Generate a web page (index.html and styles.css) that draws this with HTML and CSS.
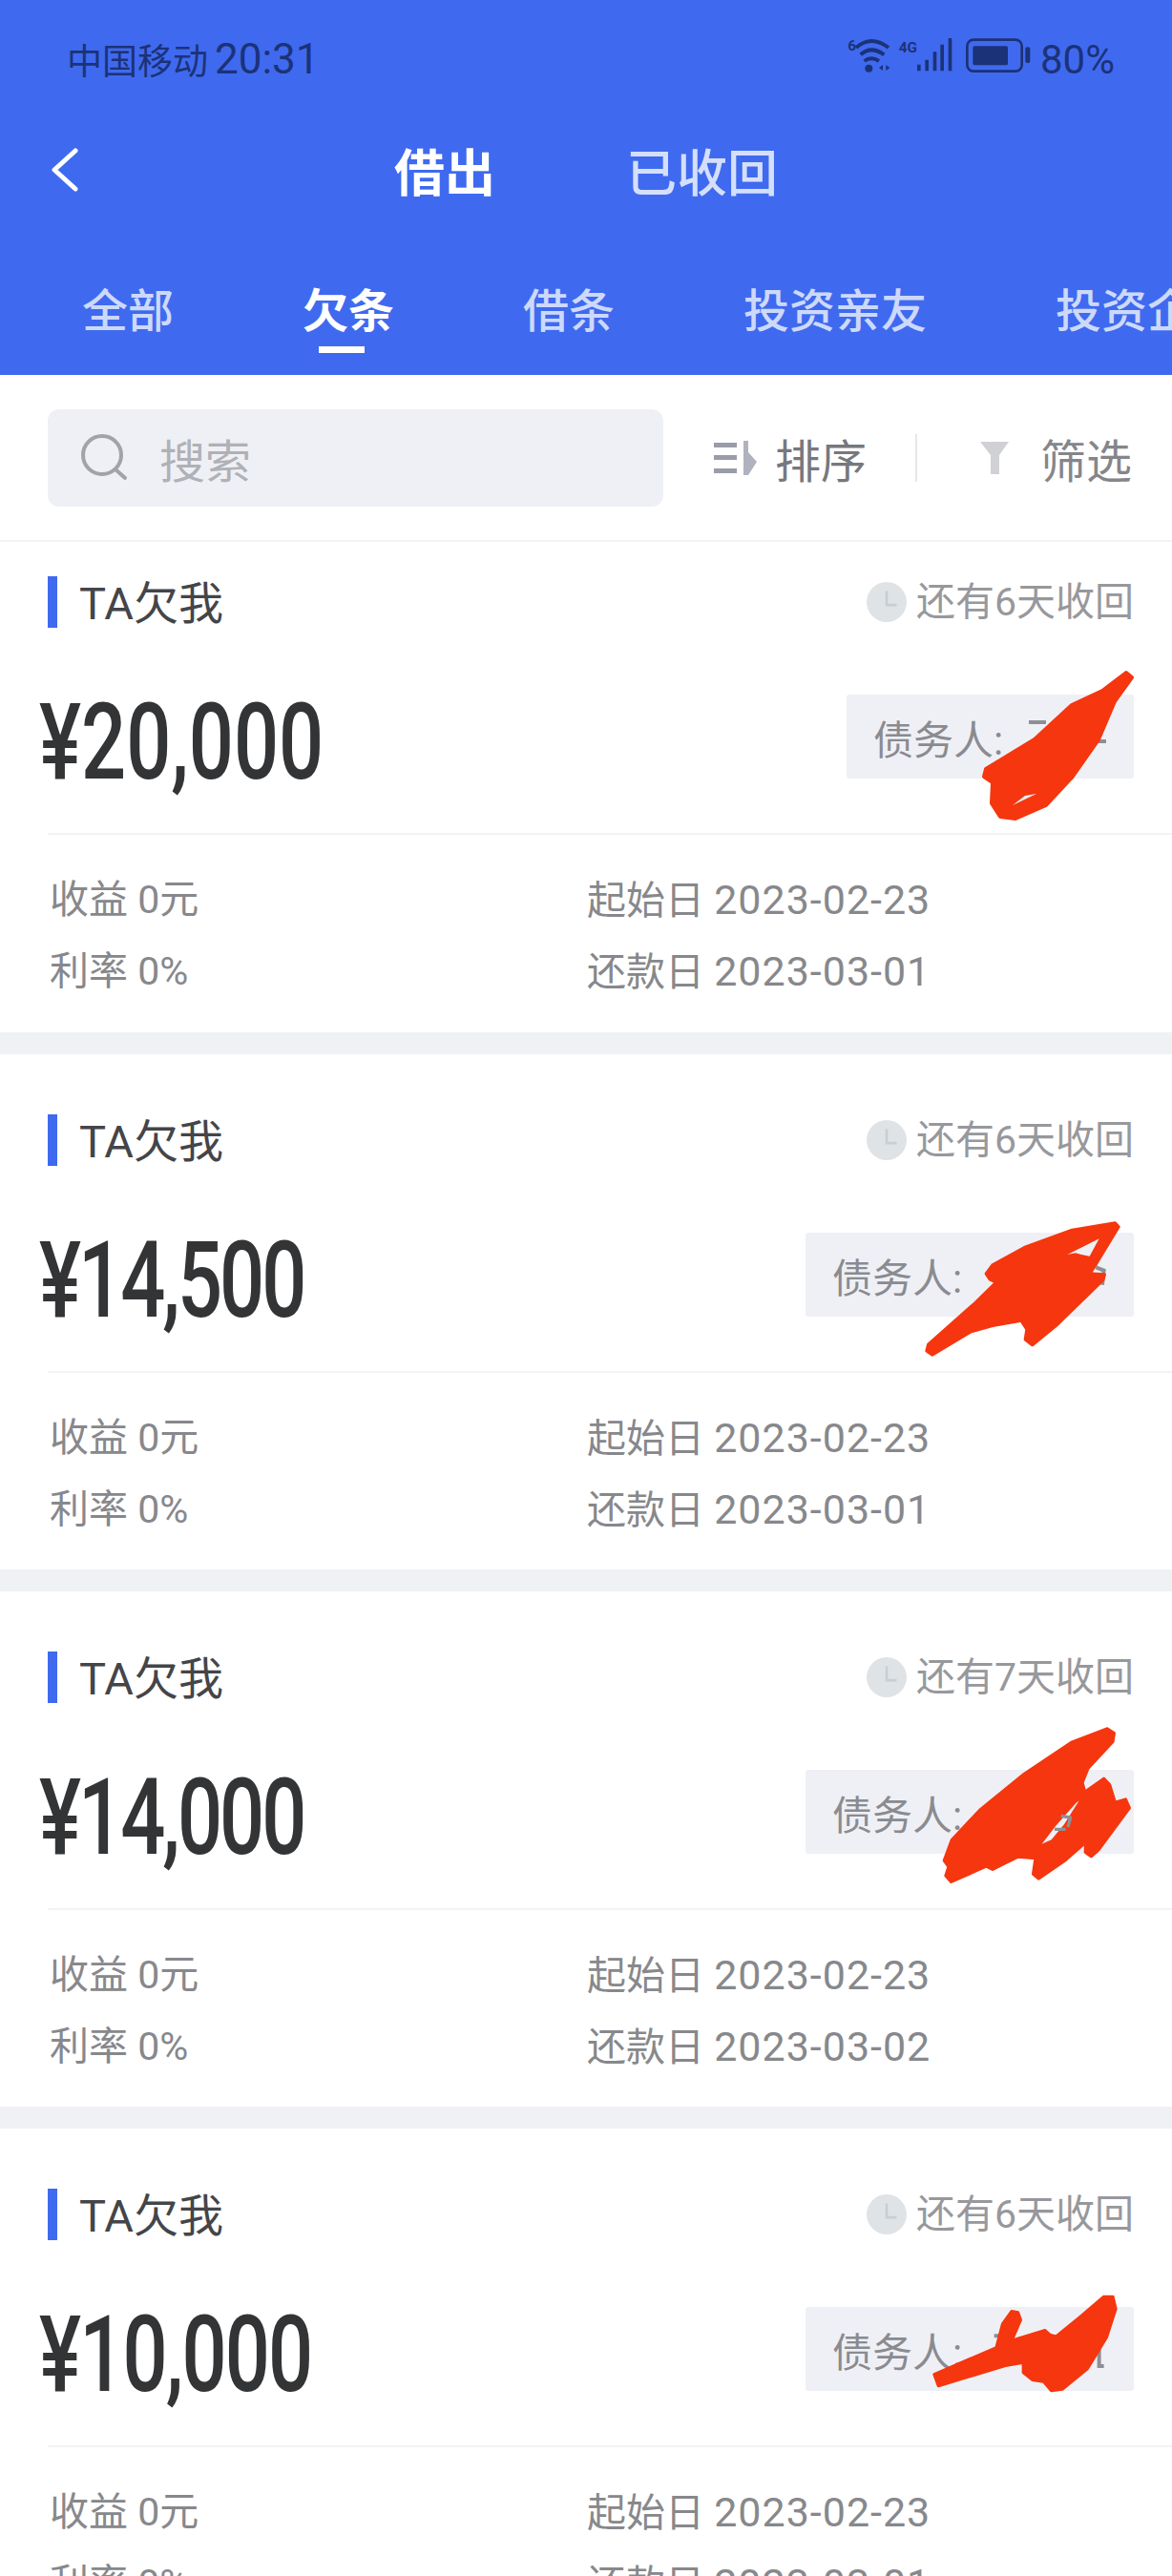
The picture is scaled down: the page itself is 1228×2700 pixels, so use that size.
FILE: index.html
```html
<!DOCTYPE html>
<html lang="zh-CN">
<head>
    <meta charset="UTF-8">
    <meta name="viewport" content="width=device-width, initial-scale=1.0">
    <title>借出</title>
    <link rel="stylesheet" href="styles.css">
</head>
<body>
<div class="page">
    <header class="topbar">
        <div class="status">
            <div class="status-left"><span class="carrier">中国移动</span><span class="clock-time">20:31</span></div>
            <div class="status-right">
                <svg class="status-icons" viewBox="0 0 600 210" width="200" height="70">
                    <text x="22" y="82" class="net-label">6</text>
                    <path d="M48 72 Q95 30 150 72 M62 94 Q95 64 136 94 M74 114 Q95 98 120 114" fill="none" stroke="#1c3278" stroke-width="12"/>
                    <circle cx="88" cy="137" r="12" fill="#1c3278"/>
                    <path d="M120 135 L132 126 V144 Z M154 135 L142 126 V144 Z" fill="#1c3278"/>
                    <text x="182" y="88" class="net-label">4G</text>
                    <path d="M240 125h11v20h-11z M265 110h11v35h-11z M290 85h11v60h-11z M313 62h11v83h-11z M338 42h11v103h-11z" fill="#1c3278"/>
                    <rect x="397" y="47" width="172" height="99" rx="20" fill="none" stroke="#1c3278" stroke-width="8"/>
                    <rect x="415" y="67" width="110" height="60" rx="5" fill="#1c3278"/>
                    <rect x="580" y="70" width="15" height="50" rx="6" fill="#1c3278"/>
                </svg>
                <span class="battery-text">80%</span>
            </div>
        </div>
        <div class="nav">
            <svg class="back" viewBox="0 0 28 46" width="28" height="46"><polyline points="25,3 3,23 25,43" fill="none" stroke="#fff" stroke-width="5" stroke-linecap="round" stroke-linejoin="round"/></svg>
            <div class="nav-title active">借出</div>
            <div class="nav-title">已收回</div>
        </div>
        <div class="tabs">
            <div class="tab">全部</div>
            <div class="tab active">欠条</div>
            <div class="tab">借条</div>
            <div class="tab">投资亲友</div>
            <div class="tab">投资企业</div>
        </div>
    </header>

    <div class="toolbar">
        <div class="search">
            <svg viewBox="0 0 50 50" width="50" height="50"><circle cx="22" cy="22" r="20" fill="none" stroke="#a2a3a8" stroke-width="4"/><path d="M36 37 L46 46" stroke="#a2a3a8" stroke-width="4" stroke-linecap="round"/></svg>
            <span>搜索</span>
        </div>
        <div class="tool sort">
            <svg viewBox="0 0 45 36" width="45" height="36"><path d="M0 2h24v5H0z M0 15h24v5H0z M0 29h24v5H0z" fill="#9a9ca8"/><path d="M31 0h5v12l9 10-9 14h-5z" fill="#b0b2be"/></svg>
            <span>排序</span>
        </div>
        <div class="tool-line"></div>
        <div class="tool filter">
            <svg viewBox="0 0 30 34" width="30" height="34"><path d="M0 0h30L20 14V34h-9V14z" fill="#d0d1d5"/></svg>
            <span>筛选</span>
        </div>
    </div>

    <section class="card card-first">
        <div class="card-head">
            <div class="card-type">TA欠我</div>
            <div class="due"><svg class="due-icon" viewBox="0 0 40 40" width="42" height="42"><circle cx="20" cy="20" r="20" fill="#dfe3e6"/><path d="M20 9V23H30" fill="none" stroke="#c6ced6" stroke-width="2.5"/></svg>还有6天收回</div>
        </div>
        <div class="card-main">
            <div class="amount">¥20,000</div>
            <div class="debtor debtor-short">债务人:</div>
        </div>
        <div class="card-info">
            <div>收益 0元</div><div>起始日 <span class="date">2023-02-23</span></div>
            <div>利率 0%</div><div>还款日 <span class="date">2023-03-01</span></div>
        </div>
    </section>

    <section class="card">
        <div class="card-head">
            <div class="card-type">TA欠我</div>
            <div class="due"><svg class="due-icon" viewBox="0 0 40 40" width="42" height="42"><circle cx="20" cy="20" r="20" fill="#dfe3e6"/><path d="M20 9V23H30" fill="none" stroke="#c6ced6" stroke-width="2.5"/></svg>还有6天收回</div>
        </div>
        <div class="card-main">
            <div class="amount amount-narrow">¥14,500</div>
            <div class="debtor">债务人:</div>
        </div>
        <div class="card-info">
            <div>收益 0元</div><div>起始日 <span class="date">2023-02-23</span></div>
            <div>利率 0%</div><div>还款日 <span class="date">2023-03-01</span></div>
        </div>
    </section>

    <section class="card">
        <div class="card-head">
            <div class="card-type">TA欠我</div>
            <div class="due"><svg class="due-icon" viewBox="0 0 40 40" width="42" height="42"><circle cx="20" cy="20" r="20" fill="#dfe3e6"/><path d="M20 9V23H30" fill="none" stroke="#c6ced6" stroke-width="2.5"/></svg>还有7天收回</div>
        </div>
        <div class="card-main">
            <div class="amount amount-narrow">¥14,000</div>
            <div class="debtor">债务人:</div>
        </div>
        <div class="card-info">
            <div>收益 0元</div><div>起始日 <span class="date">2023-02-23</span></div>
            <div>利率 0%</div><div>还款日 <span class="date">2023-03-02</span></div>
        </div>
    </section>

    <section class="card">
        <div class="card-head">
            <div class="card-type">TA欠我</div>
            <div class="due"><svg class="due-icon" viewBox="0 0 40 40" width="42" height="42"><circle cx="20" cy="20" r="20" fill="#dfe3e6"/><path d="M20 9V23H30" fill="none" stroke="#c6ced6" stroke-width="2.5"/></svg>还有6天收回</div>
        </div>
        <div class="card-main">
            <div class="amount amount-mid">¥10,000</div>
            <div class="debtor">债务人:</div>
        </div>
        <div class="card-info">
            <div>收益 0元</div><div>起始日 <span class="date">2023-02-23</span></div>
            <div>利率 0%</div><div>还款日 <span class="date">2023-03-01</span></div>
        </div>
    </section>

    <!-- red marker scribbles drawn over the debtor names -->
    <svg class="scribbles" viewBox="0 0 1228 2700" width="1228" height="2700">
        <g class="name-bits">
            <path d="M1078 757h18 M1139 777h20"/>
            <g transform="translate(840 1260) scale(.3333)"><path d="M925 205l25 10-5 45"/></g>
            <g transform="translate(840 2390) scale(.3333)"><path d="M605 175h35 M905 190v70 M935 170v100h15"/></g>
        </g>
        <g class="marker">
            <path d="M1186 710 1180 705 1155 724 1123 739 1084 775 1033 806 1031 814 1040 820 1039 842 1048 856 1064 858 1096 844 1123 815 1151 775 1168 735Z"/>
            <path class="gap" d="M1061 844 1086 832 1074 834Z"/>
            <g transform="translate(840 1260) scale(.3333)">
                <path d="M996 78 985 66 850 88 700 143 600 198 580 225 592 243 612 252 540 322 398 448 393 468 410 480 530 408 600 388 690 372 708 400 703 432 725 449 800 388 947 245 952 228 905 225 925 195Z"/>
                <path class="gap" d="M835 165 935 115 905 170 880 165 860 160Z"/>
            </g>
            <g transform="translate(840 1800) scale(.3333)">
                <path d="M982 50 960 36 850 78 700 178 560 292 472 386 448 450 462 470 453 498 470 517 580 468 600 478 680 438 735 443 728 493 745 507 830 448 893 392 892 424 910 437 932 418 1030 285 1018 258 985 268 968 212 950 193 890 235 882 205 900 160 978 76Z"/>
                <path class="gap" d="M755 398 800 340 862 270 872 262 826 335 785 385Z"/>
                <path class="name-stroke" d="M795 352h35 M815 310l30 5-8 30"/>
            </g>
            <g transform="translate(840 2390) scale(.3333)">
                <path d="M417 296 430 332 640 268 697 258 697 290 725 313 760 318 785 347 820 342 898 278 958 180 987 90 978 52 950 52 880 112 800 177 780 172 765 158 660 190 688 125 680 102 660 98 632 137 612 212Z"/>
            </g>
        </g>
    </svg>
</div>
</body>
</html>
```

FILE: styles.css
```css
* {
    box-sizing: border-box;
}
body {
    margin: 0;
    background: #fff;
    font-family: Roboto, "Noto Sans CJK SC", sans-serif;
}
.page {
    position: relative;
    width: 1228px;
    height: 2700px;
    overflow: hidden;
    background: #fff;
}

/* blue header */
.topbar {
    height: 393px;
    background: #3f6aef;
}
.status {
    height: 124px;
    padding: 0 60px 0 70px;
    display: flex;
    align-items: center;
    justify-content: space-between;
    color: #1c3278;
}
.status-left {
    display: flex;
    align-items: center;
}
.carrier {
    font-size: 37px;
}
.clock-time {
    margin-left: 7px;
    font-size: 44px;
}
.status-right {
    display: flex;
    align-items: center;
}
.status-icons {
    margin-top: -2px;
}
.net-label {
    font-family: Roboto, sans-serif;
    font-size: 46px;
    font-weight: 700;
    fill: #1c3278;
}
.battery-text {
    margin-left: 9px;
    font-size: 42px;
}
.nav {
    height: 108px;
    padding-left: 54px;
    display: flex;
    align-items: center;
    color: #d4dffb;
    font-size: 53px;
}
.back {
    margin-right: 331px;
}
.nav-title {
    font-weight: 500;
}
.nav-title.active {
    margin-right: 137px;
    color: #fff;
    font-weight: 700;
}
.tabs {
    height: 161px;
    padding: 65px 0 0 86px;
    display: flex;
    gap: 135px;
    overflow: hidden;
    white-space: nowrap;
    color: #cdd9fb;
    font-size: 48px;
    font-weight: 500;
    line-height: 60px;
}
.tab {
    position: relative;
    flex: none;
}
.tab.active {
    color: #fff;
    font-weight: 700;
}
.tab.active::after {
    content: "";
    position: absolute;
    left: 17px;
    top: 66px;
    width: 48px;
    height: 7px;
    background: #fff;
}

/* search and sort row */
.toolbar {
    height: 175px;
    padding-left: 50px;
    display: flex;
    align-items: center;
    border-bottom: 2px solid #f3f3f5;
    color: #77787d;
    font-size: 48px;
}
.search {
    width: 645px;
    height: 102px;
    padding-left: 35px;
    display: flex;
    align-items: center;
    gap: 32px;
    background: #eff0f5;
    border-radius: 12px;
    color: #b0b1b6;
}
.tool {
    display: flex;
    align-items: center;
}
.sort {
    margin-left: 53px;
    gap: 19px;
}
.tool-line {
    width: 2px;
    height: 50px;
    margin: 0 50px 0 51px;
    background: #e6e7ea;
}
.filter {
    margin-left: 16px;
    gap: 33px;
    color: #85868b;
}

/* loan cards */
.card {
    height: 563px;
    padding: 63px 40px 0 50px;
    border-bottom: 23px solid #f0f1f5;
}
.card-first {
    height: 537px;
    padding-top: 36px;
}
.card-head {
    height: 54px;
    display: flex;
    align-items: center;
    justify-content: space-between;
}
.card-type {
    height: 54px;
    padding-left: 23px;
    border-left: 10px solid #3f6aef;
    color: #444549;
    font-size: 47px;
    line-height: 58px;
}
.due {
    display: flex;
    align-items: center;
    color: #97989c;
    font-size: 41px;
    line-height: 54px;
}
.due-icon {
    margin-right: 10px;
}
.card-main {
    height: 88px;
    margin-top: 70px;
    display: flex;
    align-items: center;
    justify-content: space-between;
}
/* no condensed face installed, so the amount is squeezed to the DIN-like width */
.amount {
    margin: 11px 0 0 -9px;
    color: #333436;
    font-size: 112px;
    font-weight: 500;
    line-height: 88px;
    transform: scaleX(.74);
    transform-origin: left center;
}
.amount-narrow {
    letter-spacing: -4px;
}
.amount-mid {
    letter-spacing: -2.5px;
}
.debtor {
    width: 344px;
    height: 88px;
    padding-left: 28px;
    display: flex;
    align-items: center;
    background: #eff0f5;
    border-radius: 3px;
    color: #8a8b90;
    font-size: 42px;
}
.debtor-short {
    width: 301px;
}
.card-info {
    margin: 57px -40px 0 0;
    padding: 31px 0 0 2px;
    border-top: 2px solid #f3f3f5;
    display: grid;
    grid-template-columns: 563px 1fr;
    color: #87888c;
    font-size: 41px;
    line-height: 74px;
}
.date {
    font-size: 43px;
    letter-spacing: 1px;
}

/* overlay */
.scribbles {
    position: absolute;
    left: 0;
    top: 0;
}
.name-bits {
    fill: none;
    stroke: #8e8f94;
    stroke-width: 4;
}
.name-bits g path {
    stroke-width: 12;
}
.marker path {
    fill: #f5360f;
    stroke: #f5360f;
    stroke-width: 4;
    stroke-linejoin: round;
}
.marker g path {
    stroke-width: 10;
}
.marker path.gap {
    fill: #eff0f5;
    stroke: none;
}
.marker path.name-stroke {
    fill: none;
    stroke: #8e8f94;
    stroke-width: 10;
}
```
